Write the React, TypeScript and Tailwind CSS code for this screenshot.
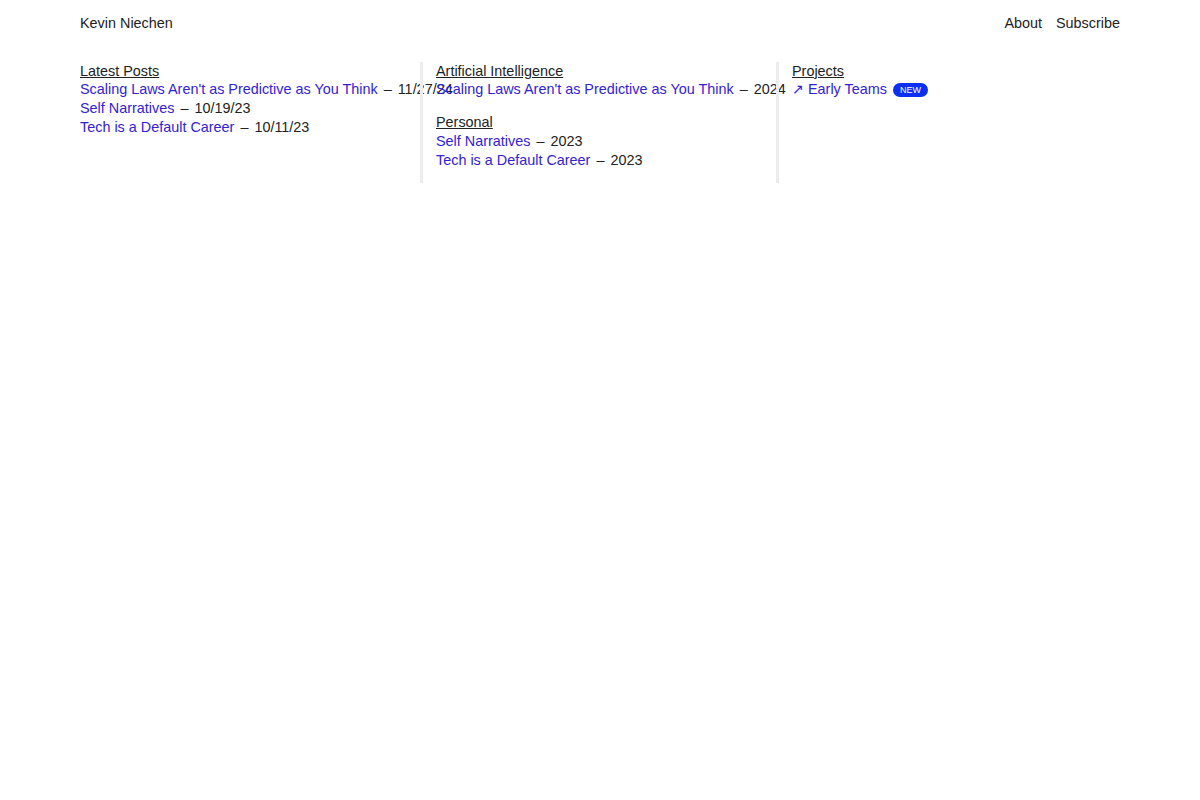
import React from "react";

type Post = { title: string; date: string };

const latest: Post[] = [
  { title: "Scaling Laws Aren't as Predictive as You Think", date: "11/27/24" },
  { title: "Self Narratives", date: "10/19/23" },
  { title: "Tech is a Default Career", date: "10/11/23" },
];

const topics: { name: string; posts: Post[] }[] = [
  {
    name: "Artificial Intelligence",
    posts: [{ title: "Scaling Laws Aren't as Predictive as You Think", date: "2024" }],
  },
  {
    name: "Personal",
    posts: [
      { title: "Self Narratives", date: "2023" },
      { title: "Tech is a Default Career", date: "2023" },
    ],
  },
];

const PostRow = ({ post }: { post: Post }) => (
  <li className="whitespace-nowrap">
    <a href="#" className="text-[#3322d4]">
      {post.title}
    </a>
    <span className="mx-[6px] text-[#222]">–</span>
    <span className="text-[#222]">{post.date}</span>
  </li>
);

export default function App() {
  return (
    <div
      className="min-h-[800px] bg-white text-[14.4px] leading-[18.7px] text-[#222]"
      style={{ fontFamily: '"Liberation Sans", Arial, sans-serif' }}
    >
      <div className="mx-auto w-[1040px]">
        <header className="flex items-center justify-between pt-[14px]">
          <a href="#" className="text-[#222]">
            Kevin Niechen
          </a>
          <nav className="flex gap-[14px]">
            <a href="#">About</a>
            <a href="#">Subscribe</a>
          </nav>
        </header>

        <main className="mt-[29px] flex gap-3">
          <section className="min-w-0 flex-1">
            <h2 className="underline">Latest Posts</h2>
            <ul>
              {latest.map((p) => (
                <PostRow key={p.title} post={p} />
              ))}
            </ul>
          </section>

          <section className="min-w-0 flex-1 border-l-[3px] border-[#ececec] pl-[13px]">
            {topics.map((t) => (
              <div key={t.name} className="mb-[14px]">
                <h2 className="underline">{t.name}</h2>
                <ul>
                  {t.posts.map((p) => (
                    <PostRow key={p.title} post={p} />
                  ))}
                </ul>
              </div>
            ))}
          </section>

          <section className="min-w-0 flex-1 border-l-[3px] border-[#ececec] pl-[13px]">
            <h2 className="underline">Projects</h2>
            <ul>
              <li className="flex items-center gap-[6px] whitespace-nowrap">
                <a href="#" className="text-[#3322d4]">
                  ↗ Early Teams
                </a>
                <span className="rounded-full bg-[#0a2ef2] px-[7px] text-[9px] leading-[14px] text-white">
                  NEW
                </span>
              </li>
            </ul>
          </section>
        </main>
      </div>
    </div>
  );
}
